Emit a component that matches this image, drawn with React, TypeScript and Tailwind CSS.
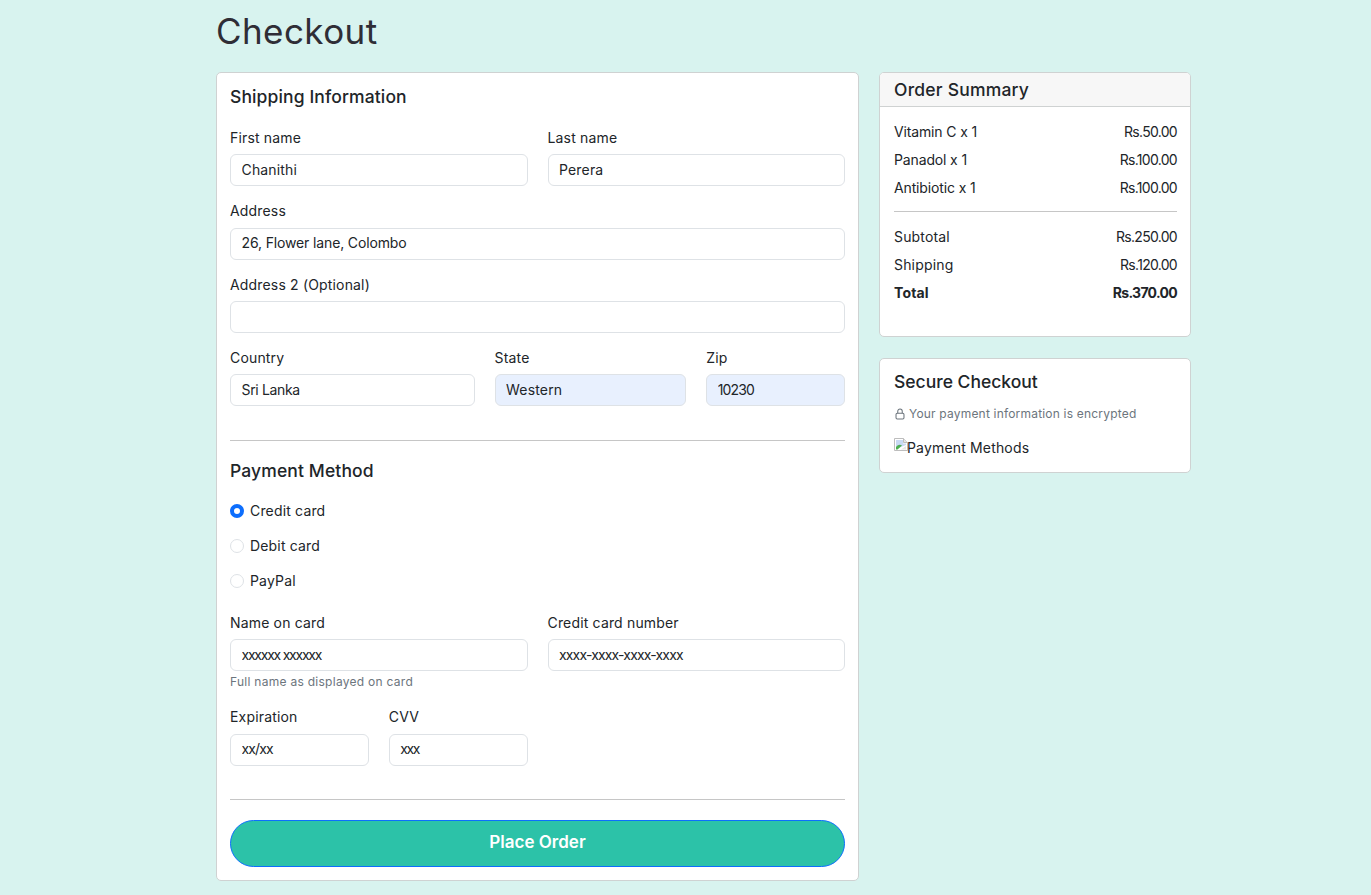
const orderItems = [
  { name: 'Vitamin C x 1', price: 'Rs.50.00' },
  { name: 'Panadol x 1', price: 'Rs.100.00' },
  { name: 'Antibiotic x 1', price: 'Rs.100.00' },
];

const paymentMethods = [
  { name: 'Credit card', checked: true },
  { name: 'Debit card', checked: false },
  { name: 'PayPal', checked: false },
];

function Field({
  label,
  value = '',
  filled = false,
  className = '',
  valueClass = 'tracking-[0.012em]',
}: {
  label: string;
  value?: string;
  filled?: boolean;
  className?: string;
  valueClass?: string;
}) {
  return (
    <div className={className}>
      <label className="block h-[17.4px] mb-2 text-[14px] leading-[17px] text-[#212529] tracking-[0.012em]">{label}</label>
      <input
        readOnly
        defaultValue={value}
        className={`block w-full h-8 px-[10.5px] pb-[2px] rounded-[6px] border border-[#dee2e6] text-[14px] text-[#212529] outline-none ${valueClass} ${filled ? 'bg-[#e8f0fe]' : 'bg-white'}`}
      />
    </div>
  );
}

function BrokenImage() {
  return (
    <svg width="14" height="13" viewBox="0 0 14 13" className="shrink-0 -mt-[5px]">
      <path d="M0.5 0.5H9.5L13.5 4.5V12.5H0.5Z" fill="#ffffff" stroke="#bdbdbd" />
      <path d="M9.5 0.5V4.5H13.5" fill="#e6e6e6" stroke="#bdbdbd" />
      <path d="M2 2H9V5.5H12V7L2 11Z" fill="#c9d9f4" />
      <path d="M2 11.5V9C4 6.5 6 6.2 8 7.5L3.5 11.5Z" fill="#4caf50" />
      <path d="M7 11.5L12 8V11.5Z" fill="#e6e6e6" />
    </svg>
  );
}

export default function App() {
  return (
    <div className="min-h-[895px] bg-[#d8f3ef] font-['Inter',sans-serif] font-[430] text-[#212529]">
      <div className="w-[975px] ml-[216px] pb-[14px]">
        <h1 className="h-[72px] pt-[9px] text-[35px] leading-[44px] text-[#2f2d36] tracking-[0.012em]">Checkout</h1>

        <div className="flex items-start gap-[20px]">
          {/* Form */}
          <div className="w-[643px] shrink-0 bg-white border border-[#cfd2d2] rounded-[5px] pt-[12.5px] px-[13px] pb-[13px]">
            <h2 className="h-[21px] mb-[22.3px] text-[17.5px] leading-[21px] font-medium tracking-[0.007em]">Shipping Information</h2>
            <div className="grid grid-cols-12 gap-x-[20px] gap-y-[16px]">
              <Field className="col-span-6" label="First name" value="Chanithi" />
              <Field className="col-span-6" label="Last name" value="Perera" />
              <Field className="col-span-12" label="Address" value="26, Flower lane, Colombo" valueClass="tracking-[-0.01em]" />
              <Field className="col-span-12" label="Address 2 (Optional)" />
              <Field className="col-span-5" label="Country" value="Sri Lanka" valueClass="tracking-[-0.025em]" />
              <Field className="col-span-4" label="State" value="Western" filled />
              <Field className="col-span-3" label="Zip" value="10230" filled valueClass="tracking-[-0.06em]" />
            </div>

            <hr className="mt-[34px] mb-[19px] border-t border-[#c6c6c6]" />

            <h2 className="h-[21px] mb-[20px] text-[17.5px] leading-[21px] font-medium tracking-[0.007em]">Payment Method</h2>
            <div className="flex flex-col gap-[15px] mb-[22.5px]">
              {paymentMethods.map((method) => (
                <div key={method.name} className="flex items-center gap-[6px] h-[20px]">
                  {method.checked ? (
                    <span className="w-[14px] h-[14px] rounded-full border-[4px] border-[#0d6efd] bg-white" />
                  ) : (
                    <span className="w-[14px] h-[14px] rounded-full border border-[#dee2e6] bg-white" />
                  )}
                  <span className="text-[14px] leading-[18px] pb-[1px] tracking-[0.012em]">{method.name}</span>
                </div>
              ))}
            </div>

            <div className="grid grid-cols-12 gap-x-[20px]">
              <div className="col-span-6">
                <Field label="Name on card" value="xxxxxx xxxxxx" valueClass="tracking-[-0.088em]" />
                <p className="mt-[2px] h-[18px] text-[12px] leading-[18px] text-[#6c757d] tracking-[0.023em]">Full name as displayed on card</p>
              </div>
              <Field className="col-span-6" label="Credit card number" value="xxxx-xxxx-xxxx-xxxx" valueClass="tracking-[-0.06em]" />
            </div>
            <div className="grid grid-cols-12 gap-x-[20px] mt-[17px]">
              <Field className="col-span-3" label="Expiration" value="xx/xx" valueClass="tracking-[-0.06em]" />
              <Field className="col-span-3" label="CVV" value="xxx" valueClass="tracking-[-0.1em]" />
            </div>

            <hr className="mt-[33px] mb-[20px] border-t border-[#c6c6c6]" />

            <button className="block w-full h-[47px] rounded-full bg-[#2cc2a8] border border-[#0d6efd] text-white text-[17px] font-semibold">
              Place Order
            </button>
          </div>

          {/* Sidebar */}
          <div className="flex-1 flex flex-col gap-[21px]">
            <div className="bg-white border border-[#cfd2d2] rounded-[5px] overflow-hidden">
              <div className="h-[34px] px-[14px] bg-[#f7f7f7] border-b border-[#cfd2d2] text-[17.5px] leading-[33px] font-medium tracking-[0.012em]">
                Order Summary
              </div>
              <div className="pt-[11px] pl-[14px] pr-[13px] pb-[29px] text-[14px] tracking-[0.012em]">
                {orderItems.map((item) => (
                  <div key={item.name} className="flex justify-between h-[28px] leading-[28px]">
                    <span className="tracking-[-0.01em]">{item.name}</span>
                    <span className="tracking-[-0.05em]">{item.price}</span>
                  </div>
                ))}
                <hr className="mt-[9px] mb-[11px] border-t border-[#c6c6c6]" />
                <div className="flex justify-between h-[28px] leading-[28px]">
                  <span>Subtotal</span>
                  <span className="tracking-[-0.05em]">Rs.250.00</span>
                </div>
                <div className="flex justify-between h-[28px] leading-[28px]">
                  <span>Shipping</span>
                  <span className="tracking-[-0.05em]">Rs.120.00</span>
                </div>
                <div className="flex justify-between h-[28px] leading-[28px] font-bold">
                  <span>Total</span>
                  <span className="tracking-[-0.05em]">Rs.370.00</span>
                </div>
              </div>
            </div>

            <div className="h-[115px] bg-white border border-[#cfd2d2] rounded-[5px] pt-[12px] px-[14px]">
              <h2 className="h-[21px] mb-[13px] text-[17.5px] leading-[21px] font-medium">Secure Checkout</h2>
              <div className="flex items-center gap-[3px] h-[18px] mb-[14px] text-[12px] text-[#6c757d] tracking-[0.016em]">
                <svg width="12" height="12" viewBox="0 0 16 16" fill="none" stroke="#6c757d" strokeWidth="1.4" className="shrink-0">
                  <rect x="2.7" y="7" width="10.6" height="7.6" rx="1.6" />
                  <path d="M5 7V4.3a3 3 0 0 1 6 0V7" />
                </svg>
                <span>Your payment information is encrypted</span>
              </div>
              <div className="flex items-center h-[20px] text-[14px] tracking-[0.012em]">
                <BrokenImage />
                <span className="-ml-px">Payment Methods</span>
              </div>
            </div>
          </div>
        </div>
      </div>
    </div>
  );
}
